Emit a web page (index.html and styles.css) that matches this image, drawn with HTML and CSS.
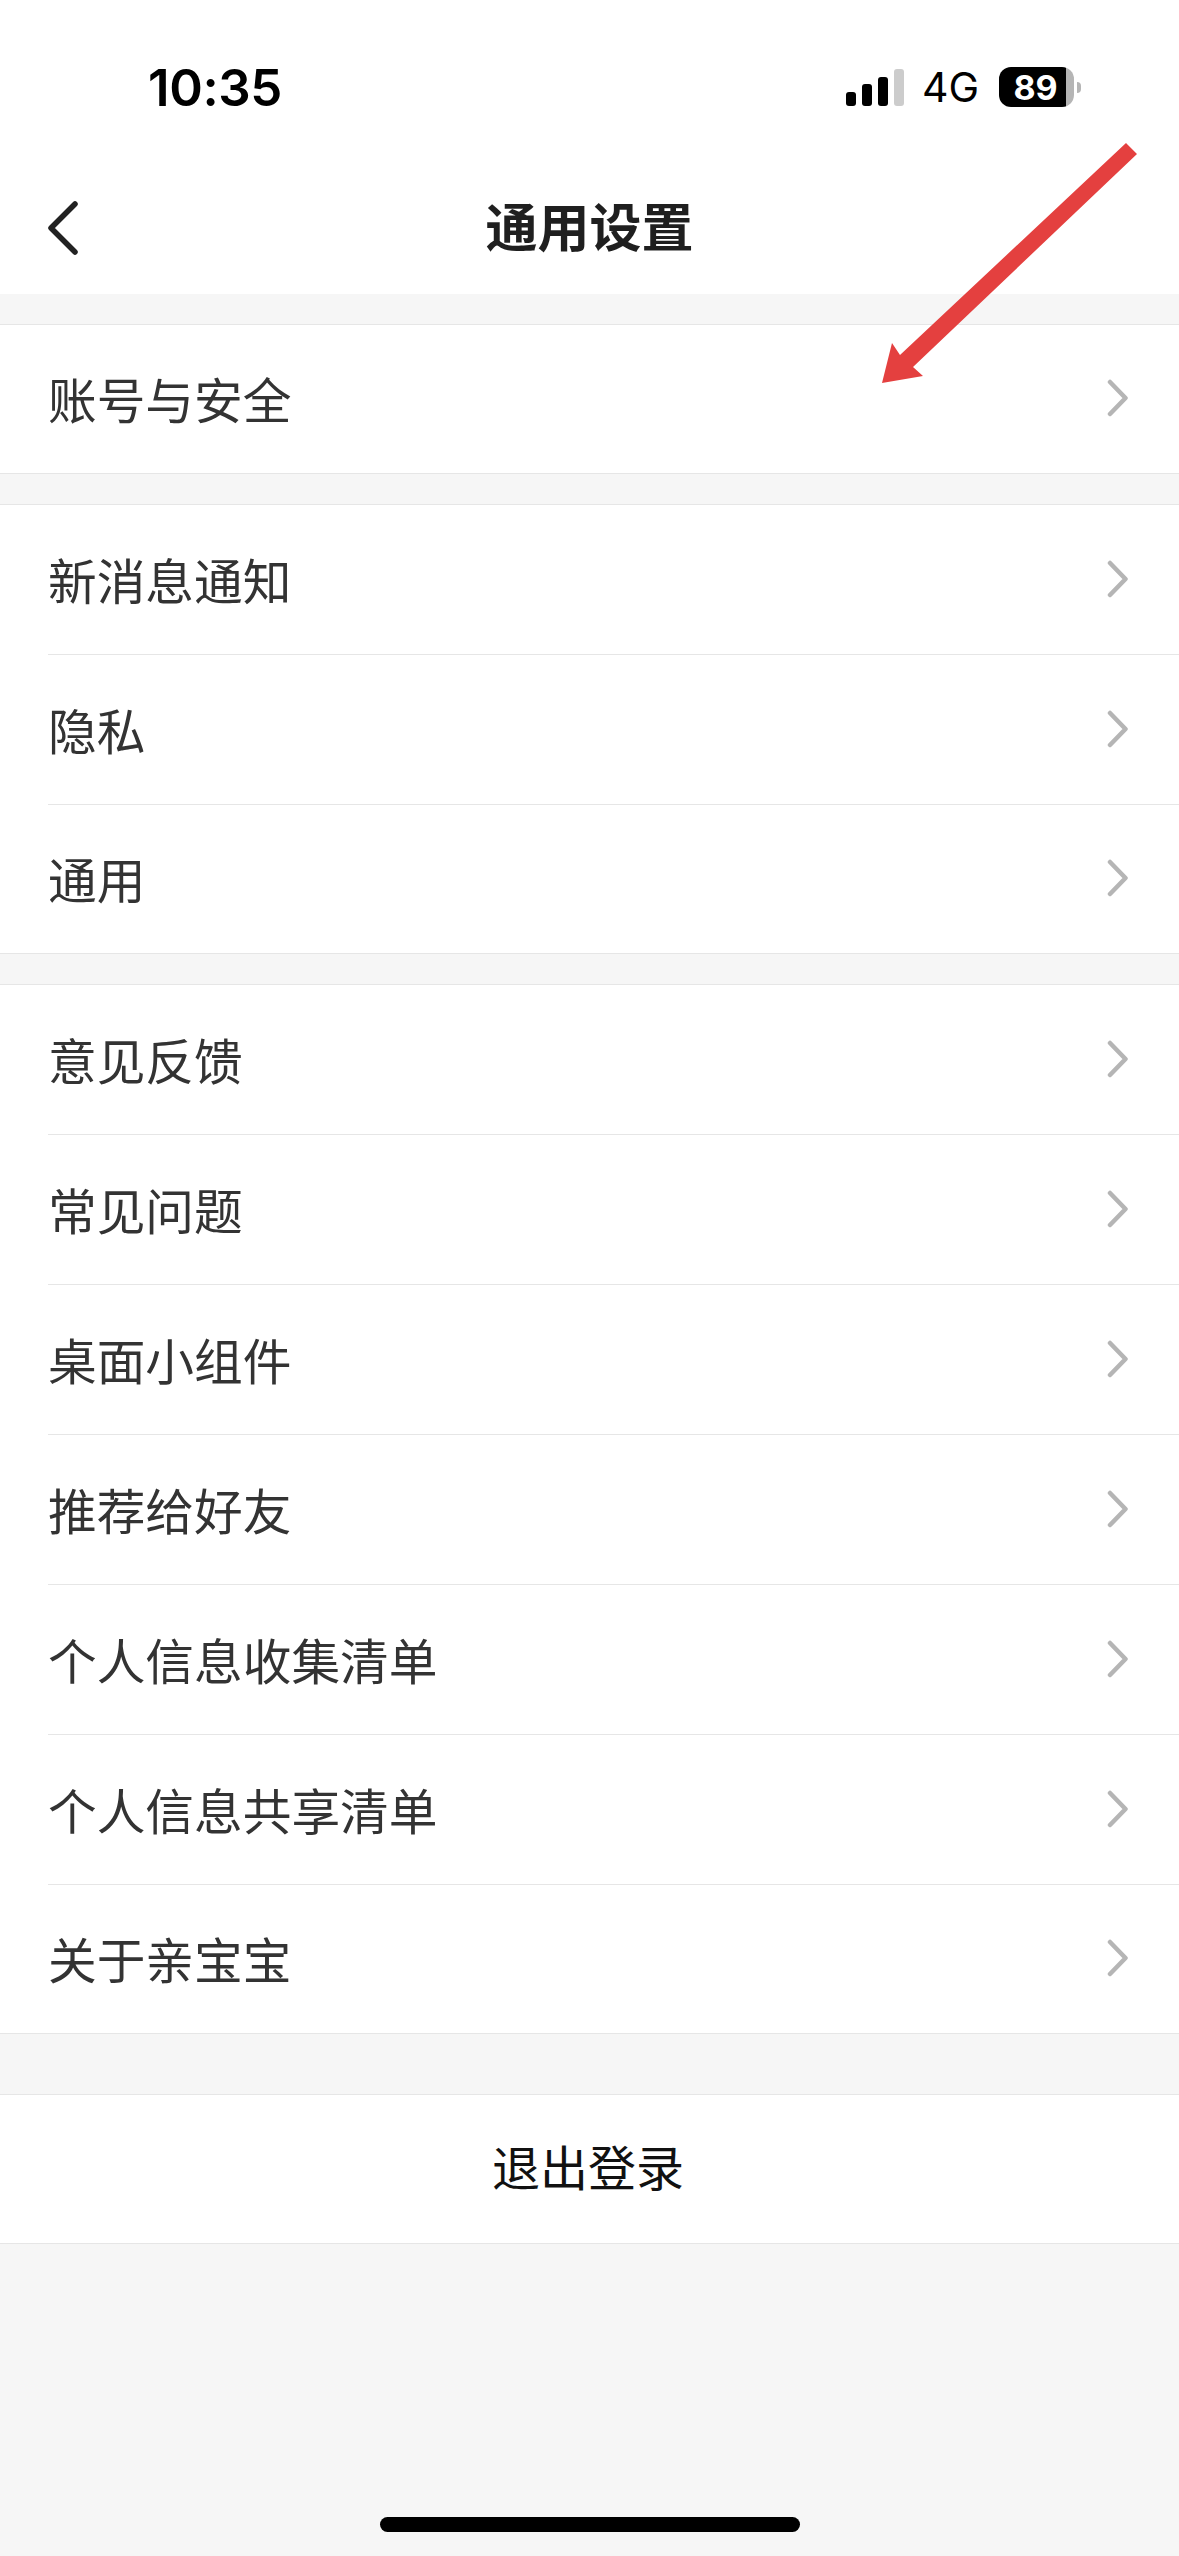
FILE: index.html
```html
<!DOCTYPE html>
<html lang="zh-CN">
<head>
  <meta charset="UTF-8">
  <title>通用设置</title>
  <link rel="stylesheet" href="styles.css">
</head>
<body>
  <div class="page">
    <header class="status">
      <span class="time">10:35</span>
      <div class="status-right">
        <div class="signal">
          <i class="bar bar1"></i>
          <i class="bar bar2"></i>
          <i class="bar bar3"></i>
          <i class="bar bar4"></i>
        </div>
        <span class="net">4G</span>
        <div class="battery"><span>89</span></div>
        <i class="battery-tip"></i>
      </div>
    </header>

    <nav class="nav">
      <svg class="back" viewBox="0 0 36 56" width="36" height="56">
        <path d="M30 4 L6 28 L30 52" fill="none" stroke="#222" stroke-width="5.5" stroke-linecap="round" stroke-linejoin="round"/>
      </svg>
      <h1>通用设置</h1>
    </nav>

    <section class="group">
      <div class="row"><span>账号与安全</span><svg class="more" viewBox="0 0 24 40" width="24" height="40"><path d="M3 4 L18.5 20 L3 36"/></svg></div>
    </section>

    <section class="group">
      <div class="row"><span>新消息通知</span><svg class="more" viewBox="0 0 24 40" width="24" height="40"><path d="M3 4 L18.5 20 L3 36"/></svg></div>
      <div class="row"><span>隐私</span><svg class="more" viewBox="0 0 24 40" width="24" height="40"><path d="M3 4 L18.5 20 L3 36"/></svg></div>
      <div class="row"><span>通用</span><svg class="more" viewBox="0 0 24 40" width="24" height="40"><path d="M3 4 L18.5 20 L3 36"/></svg></div>
    </section>

    <section class="group">
      <div class="row"><span>意见反馈</span><svg class="more" viewBox="0 0 24 40" width="24" height="40"><path d="M3 4 L18.5 20 L3 36"/></svg></div>
      <div class="row"><span>常见问题</span><svg class="more" viewBox="0 0 24 40" width="24" height="40"><path d="M3 4 L18.5 20 L3 36"/></svg></div>
      <div class="row"><span>桌面小组件</span><svg class="more" viewBox="0 0 24 40" width="24" height="40"><path d="M3 4 L18.5 20 L3 36"/></svg></div>
      <div class="row"><span>推荐给好友</span><svg class="more" viewBox="0 0 24 40" width="24" height="40"><path d="M3 4 L18.5 20 L3 36"/></svg></div>
      <div class="row"><span>个人信息收集清单</span><svg class="more" viewBox="0 0 24 40" width="24" height="40"><path d="M3 4 L18.5 20 L3 36"/></svg></div>
      <div class="row"><span>个人信息共享清单</span><svg class="more" viewBox="0 0 24 40" width="24" height="40"><path d="M3 4 L18.5 20 L3 36"/></svg></div>
      <div class="row"><span>关于亲宝宝</span><svg class="more" viewBox="0 0 24 40" width="24" height="40"><path d="M3 4 L18.5 20 L3 36"/></svg></div>
    </section>

    <section class="group logout">退出登录</section>

    <footer class="home"><i></i></footer>

    <!-- red annotation drawn on top of the screenshot -->
    <svg class="arrow" viewBox="0 0 1179 2556" width="1179" height="2556">
      <polygon points="1126,143 1137,154 913,367 923,376 882,383 892,343 900,355" fill="#e4403f"/>
    </svg>
  </div>
</body>
</html>
```

FILE: styles.css
```css
* {
  margin: 0;
  padding: 0;
  box-sizing: border-box;
}

body {
  background: #f6f6f6;
  font-family: "Noto Sans CJK SC", "Noto Sans", sans-serif;
}

.page {
  position: relative;
  display: flex;
  flex-direction: column;
  width: 1179px;
  height: 2556px;
  overflow: hidden;
}

/* status bar */
.status {
  display: flex;
  justify-content: space-between;
  align-items: flex-start;
  height: 165px;
  padding: 58px 98px 0 148px;
  background: #fff;
}

.time {
  font-family: Inter, sans-serif;
  font-size: 51px;
  font-weight: 600;
  line-height: 60px;
  letter-spacing: -0.4px;
  color: #000;
}

.status-right {
  display: flex;
  align-items: center;
  height: 40px;
  margin-top: 9px;
}

.signal {
  display: flex;
  align-items: flex-end;
  gap: 6px;
  height: 37px;
  margin-right: 18px;
}

.bar {
  display: block;
  width: 10px;
  border-radius: 3px;
  background: #000;
}

.bar1 { height: 14px; }
.bar2 { height: 22px; }
.bar3 { height: 29px; }
.bar4 { height: 37px; background: #ccc; }

.net {
  width: 55px;
  margin-right: 22px;
  font-family: Inter, sans-serif;
  font-size: 41px;
  line-height: 40px;
  color: #000;
}

.battery {
  display: flex;
  justify-content: center;
  align-items: center;
  width: 75px;
  height: 40px;
  padding-right: 2px;
  border-radius: 12px;
  background: linear-gradient(to right, #000 67px, #b5b5b5 67px);
}

.battery span {
  font-family: Inter, sans-serif;
  font-size: 34px;
  font-weight: 700;
  color: #fff;
}

.battery-tip {
  display: block;
  width: 4px;
  height: 11px;
  margin-left: 3px;
  border-radius: 0 6px 6px 0;
  background: #b5b5b5;
}

/* nav */
.nav {
  display: flex;
  justify-content: center;
  align-items: center;
  position: relative;
  height: 129px;
  padding-bottom: 9px;
  background: #fff;
}

.nav h1 {
  font-size: 52px;
  font-weight: 700;
  line-height: 70px;
  color: #1f1f1f;
}

.back {
  position: absolute;
  left: 45px;
  top: 35px;
}

/* list */
.group {
  margin-top: 30px;
  border-top: 1px solid #e6e6e6;
  border-bottom: 1px solid #e6e6e6;
  background: #fff;
}

.row {
  display: flex;
  justify-content: space-between;
  align-items: center;
  height: 150px;
  margin-left: 48px;
  padding-right: 48px;
  padding-bottom: 2px;
  border-bottom: 1px solid #e6e6e6;
  font-size: 48.7px;
  color: #333;
}

.row:last-child {
  height: 148px;
  border-bottom: none;
}

.more path {
  fill: none;
  stroke: #b5b5b5;
  stroke-width: 4.5;
  stroke-linecap: round;
  stroke-linejoin: round;
}

.logout {
  height: 150px;
  margin-top: 60px;
  padding-right: 3px;
  font-size: 48px;
  line-height: 140px;
  text-align: center;
  color: #111;
}

.home {
  display: flex;
  justify-content: center;
  margin-top: auto;
  padding-bottom: 24px;
}

.home i {
  display: block;
  width: 420px;
  height: 15px;
  border-radius: 8px;
  background: #000;
}

.arrow {
  position: absolute;
  top: 0;
  left: 0;
}
```
